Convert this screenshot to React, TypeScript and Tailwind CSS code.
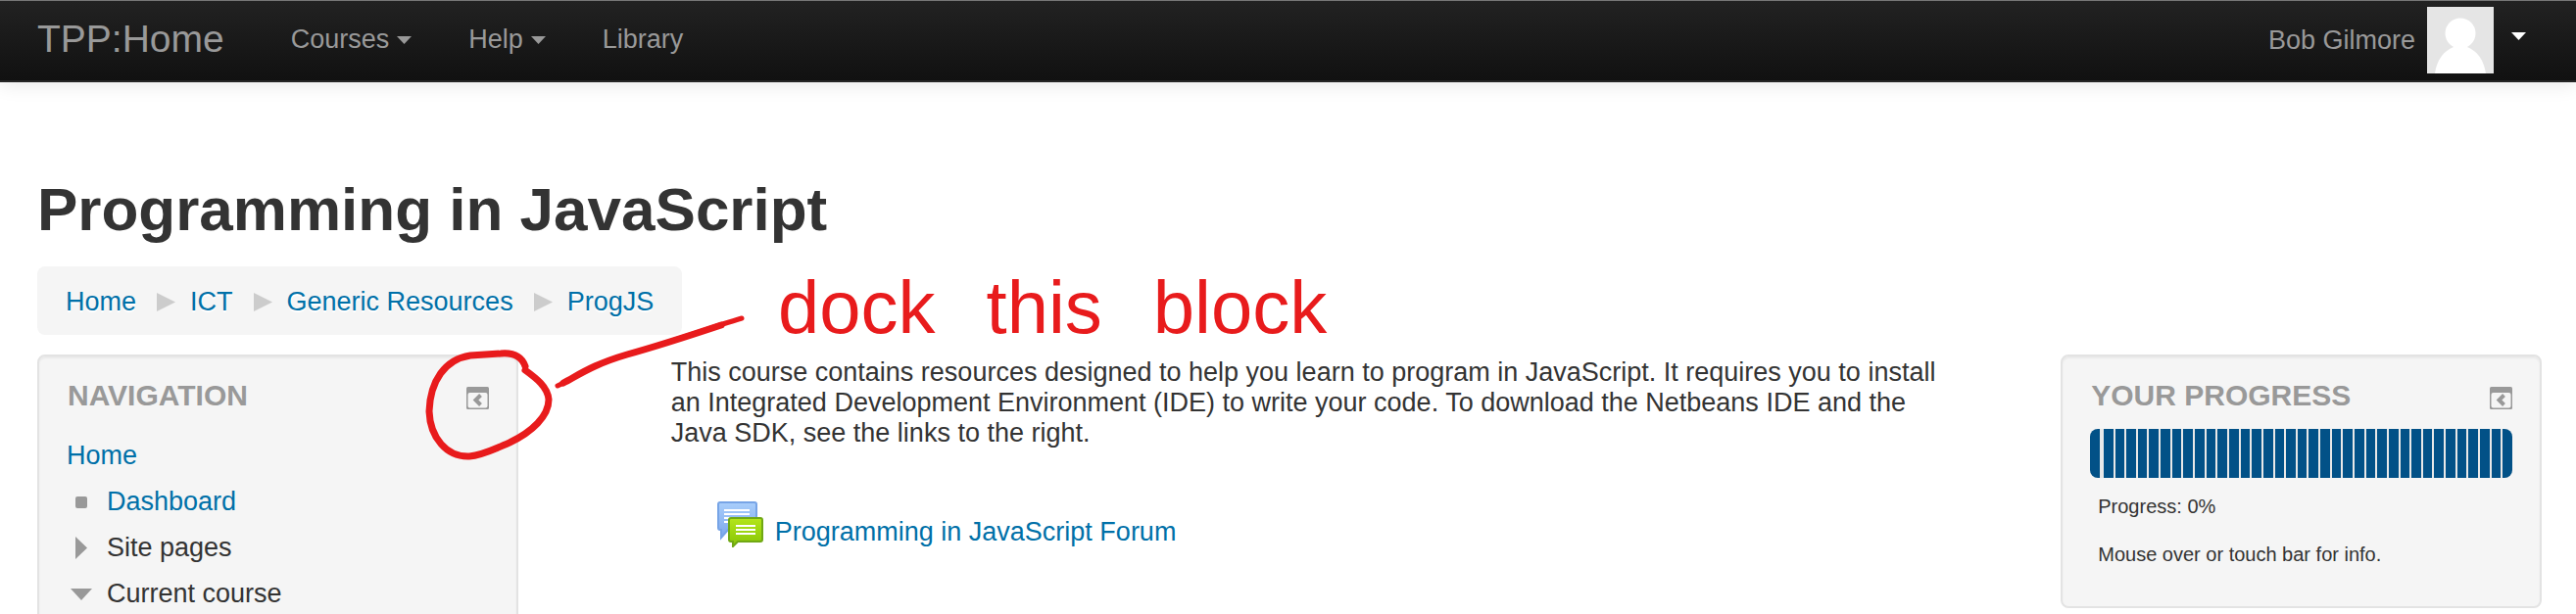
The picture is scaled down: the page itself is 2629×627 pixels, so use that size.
import type { ReactNode } from 'react';

const crumbs = ['Home', 'ICT', 'Generic Resources', 'ProgJS'];

function Caret({ className }: { className?: string }) {
    return (
        <svg viewBox="0 0 15 8" className={`w-[15px] h-2 ${className ?? ''}`} aria-hidden="true">
            <path d="M0 0h15L7.5 8z" fill="currentColor" />
        </svg>
    );
}

function DockIcon() {
    return (
        <svg viewBox="0 0 23 23" className="w-[23px] h-[23px]" aria-hidden="true">
            <rect width="23" height="23" rx="1.5" fill="#999" />
            <rect x="1.5" y="6" width="20" height="15.5" rx="2" fill="#f5f5f5" />
            <path d="M14.5 8.5L9.5 13.5L14.5 18.5" fill="none" stroke="#999" strokeWidth="4" />
        </svg>
    );
}

function Avatar() {
    return (
        <svg viewBox="0 0 68 68" className="w-[68px] h-[68px]" role="img" aria-label="Picture of Bob Gilmore">
            <rect width="68" height="68" fill="#e5e5e5" />
            <circle cx="34" cy="27" r="15.5" fill="#fff" />
            <path d="M8 68C10 54 17 45 27 41L29 38H39L41 41C51 45 58 54 60 68z" fill="#fff" />
        </svg>
    );
}

function ForumIcon() {
    return (
        <svg viewBox="0 0 47 47" className="w-[47px] h-[47px]" aria-hidden="true">
            <defs>
                <linearGradient id="bubbleBlue" x1="0" y1="0" x2="0" y2="1">
                    <stop offset="0" stopColor="#a9cefb" />
                    <stop offset="1" stopColor="#7ba6ec" />
                </linearGradient>
                <linearGradient id="bubbleGreen" x1="0" y1="0" x2="0" y2="1">
                    <stop offset="0" stopColor="#b4e61a" />
                    <stop offset="1" stopColor="#86c406" />
                </linearGradient>
            </defs>
            <path d="M3 1h35a2 2 0 0 1 2 2v24a2 2 0 0 1-2 2H11L4 37V29H3a2 2 0 0 1-2-2V3a2 2 0 0 1 2-2z" fill="url(#bubbleBlue)" stroke="#77a4e6" strokeWidth="2" />
            <path d="M7 9h26M7 13h26M7 17h26M7 21h8" stroke="#fff" strokeWidth="2" />
            <path d="M14 17h30a2 2 0 0 1 2 2v20a2 2 0 0 1-2 2H21l-5 5v-5h-2a2 2 0 0 1-2-2V19a2 2 0 0 1 2-2z" fill="url(#bubbleGreen)" stroke="#70a814" strokeWidth="2" />
            <path d="M19 25h20M19 29h20M19 33h20" stroke="#fff" strokeWidth="2" />
        </svg>
    );
}

function Block({ title, children }: { title: string; children: ReactNode }) {
    return (
        <section className="rounded-lg border-2 border-[#e3e3e3] bg-[#f5f5f5] px-7 pt-[22px] shadow-[inset_0_2px_2px_rgba(0,0,0,0.05)]">
            <div className="flex items-center justify-between pl-px">
                <h2 className="text-[30px] leading-[36px] font-bold uppercase text-[#999]">{title}</h2>
                <button type="button" aria-label={`Dock ${title} block`} className="cursor-pointer pt-1">
                    <DockIcon />
                </button>
            </div>
            {children}
        </section>
    );
}

function ProgressBar() {
    return (
        <div className="mt-4 flex h-[50px] gap-[2px] overflow-hidden rounded-lg bg-[#e8e8e8]" role="progressbar" aria-label="Your progress" aria-valuenow={0}>
            {Array.from({ length: 37 }, (_, i) => (
                <div key={i} className="flex-1 bg-[#025187] first:mr-[2px]" />
            ))}
        </div>
    );
}

// Pen marks drawn over the page
function Annotation() {
    return (
        <div className="pointer-events-none absolute top-0 left-0 text-[#e81b1c]">
            <svg viewBox="0 0 800 627" className="w-[800px] h-[627px]" fill="none" stroke="currentColor" strokeLinecap="round" aria-hidden="true">
                <path d="M536 374C532 363 522 360 511 361L480 363C454 367 439 389 438 420C439 447 456 467 479 466C492 465 506 458 520 452C543 441 560 425 560 408C559 395 547 386 536 378" strokeWidth="7" />
                <path d="M569 394C590 384 602 373 640 362C681 351 720 336 757 325" strokeWidth="5" />
                <path d="M575 391C592 382 606 372 640 362C676 352 706 342 736 332" strokeWidth="7" />
            </svg>
            <p className="absolute top-[258px] left-[794px] flex gap-[52px] whitespace-nowrap text-[76px] leading-[112px]">
                <span>dock</span>
                <span>this</span>
                <span>block</span>
            </p>
        </div>
    );
}

export default function App() {
    return (
        <div className="relative overflow-hidden bg-white font-['Liberation_Sans',Arial,sans-serif] text-[27px] leading-[31px] text-[#333]">
            <header className="flex h-[84px] items-center border-t border-b-2 border-t-[#777] border-b-[#252525] bg-linear-to-b from-[#222] to-[#111] pr-[51px] pb-[2px] pl-[38px] text-[#999] shadow-[0_2px_19px_rgba(0,0,0,0.1)]">
                <a href="#" className="pb-[2px] text-[39px] leading-[40px]">TPP:Home</a>
                <nav className="ml-[68px] flex gap-[58px]">
                    <button type="button" className="flex items-center gap-2">Courses<Caret /></button>
                    <button type="button" className="flex items-center gap-2">Help<Caret /></button>
                    <a href="#">Library</a>
                </nav>
                <div className="ml-auto flex items-center">
                    <a href="#" className="pt-[2px]">Bob Gilmore</a>
                    <div className="ml-3"><Avatar /></div>
                    <button type="button" aria-label="User menu" className="ml-[18px] pb-2"><Caret className="text-white" /></button>
                </div>
            </header>

            <div className="pt-[98px] pr-[35px] pl-[38px]">
                <h1 className="text-[62px] leading-[64px] font-bold">Programming in JavaScript</h1>
                <nav aria-label="Breadcrumb" className="mt-[26px] flex w-fit items-center gap-[15px] rounded-lg bg-[#f5f5f5] px-[29px] pt-[21px] pb-[19px] leading-[30px]">
                    {crumbs.map((name, i) => (
                        <div key={name} className="flex items-center gap-[15px]">
                            {i > 0 && (
                                <svg viewBox="0 0 19 19" className="ml-[6px] w-[19px] h-[19px]" aria-hidden="true">
                                    <path d="M0 0l19 9.5L0 19z" fill="#ccc" />
                                </svg>
                            )}
                            <a href="#" className="text-[#0070a8] [text-shadow:0_2px_0_#fff]">{name}</a>
                        </div>
                    ))}
                </nav>

                <div className="mt-5 flex items-start">
                    <aside className="w-[19.2%] shrink-0">
                        <Block title="Navigation">
                            <ul className="h-[220px] pt-5 leading-[47px]">
                                <li><a href="#" className="text-[#0070a8]">Home</a></li>
                                <li className="flex items-center">
                                    <span className="ml-[9px] mr-5 size-3 rounded-[2px] bg-[#999]" />
                                    <a href="#" className="text-[#0070a8]">Dashboard</a>
                                </li>
                                <li className="flex items-center">
                                    <svg viewBox="0 0 12 23" className="ml-[9px] mr-5 w-3 h-[23px]" aria-hidden="true"><path d="M0 0l12 11.5L0 23z" fill="#999" /></svg>
                                    Site pages
                                </li>
                                <li className="flex items-center">
                                    <svg viewBox="0 0 22 12" className="ml-1 mr-[15px] w-[22px] h-3" aria-hidden="true"><path d="M0 0h22L11 12z" fill="#999" /></svg>
                                    Current course
                                </li>
                            </ul>
                        </Block>
                    </aside>

                    <main className="ml-[156px] flex-1 pr-[90px]">
                        <p className="max-w-[1315px] pt-[3px]">
                            This course contains resources designed to help you learn to program in JavaScript. It requires you to install
                            an Integrated Development Environment (IDE) to write your code. To download the Netbeans IDE and the Java SDK,
                            see the links to the right.
                        </p>
                        <a href="#" className="mt-[54px] ml-[47px] flex w-fit items-end gap-3 text-[#0070a8]">
                            <ForumIcon />
                            Programming in JavaScript Forum
                        </a>
                    </main>

                    <aside className="w-[19.2%] shrink-0">
                        <Block title="Your progress">
                            <ProgressBar />
                            <div className="px-2 pt-[5px] pb-[28px] text-[20px] leading-[49px]">
                                <p>Progress: 0%</p>
                                <p>Mouse over or touch bar for info.</p>
                            </div>
                        </Block>
                    </aside>
                </div>
            </div>
            <Annotation />
        </div>
    );
}
